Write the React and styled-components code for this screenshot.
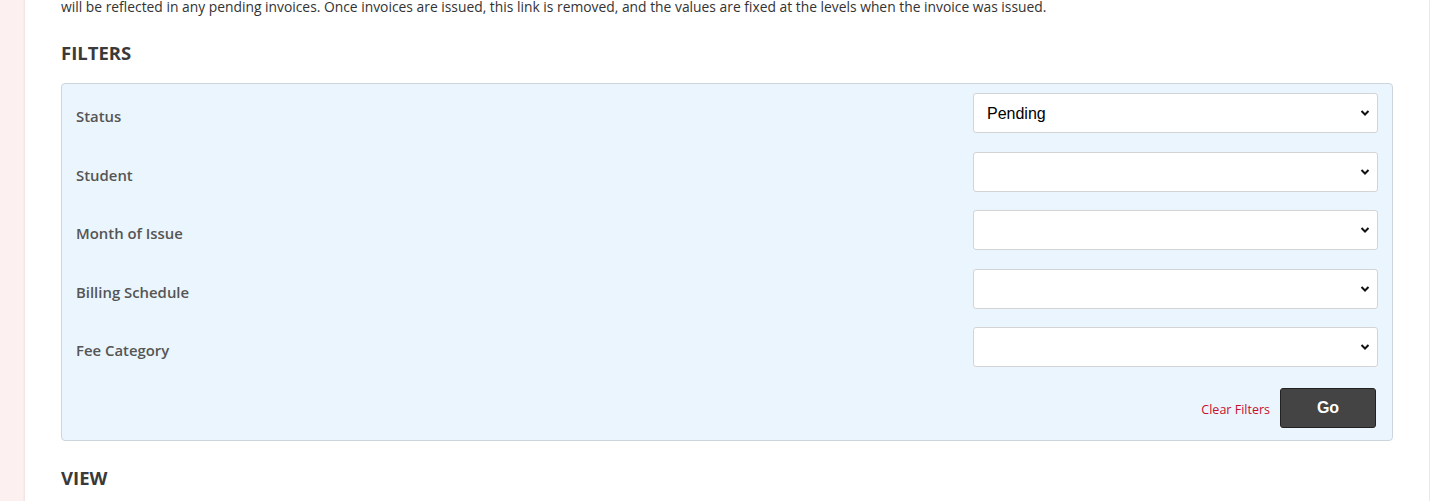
import React from "react";
import styled, { createGlobalStyle } from "styled-components";

const GlobalStyle = createGlobalStyle`
  html, body {
    margin: 0;
    padding: 0;
    background: #fdf0f0;
    font-family: "Open Sans", "Noto Sans", sans-serif;
    overflow: hidden;
  }
`;

const Page = styled.div`
  margin-left: 25px;
  width: 1404px;
  min-height: 501px;
  background: #fff;
  box-shadow: 0 0 3px rgba(0, 0, 0, 0.12);
  padding: 0 36px;
  box-sizing: border-box;
  overflow: hidden;
`;

const Intro = styled.p`
  margin: -3px 0 0;
  font-size: 13.85px;
  line-height: 20px;
  color: #333;
`;

const Heading = styled.h2`
  margin: ${p => (p.$spaced ? "24px" : "23px")} 0 18px;
  font-size: 18.5px;
  line-height: 25px;
  font-weight: 700;
  color: #3a3a3a;
  text-transform: uppercase;
`;

const FilterPanel = styled.form`
  background: #ebf5fe;
  border: 1px solid #cdd5dd;
  border-radius: 4px;
  padding: 9px 14px 12px;
  display: flex;
  flex-direction: column;
  gap: 18.5px;
`;

const Row = styled.div`
  display: flex;
  align-items: center;
  justify-content: space-between;
  height: 40px;
`;

const Label = styled.label`
  font-size: 14.9px;
  font-weight: 600;
  color: #555;
  padding-top: 6px;
`;

const SelectWrap = styled.div`
  position: relative;
  width: 405px;
  height: 40px;
`;

const Select = styled.select`
  appearance: none;
  width: 100%;
  height: 100%;
  box-sizing: border-box;
  border: 1px solid #d4d4d4;
  border-radius: 3px;
  background: #fff;
  padding: 0 30px 0 13px;
  font-family: "Liberation Sans", Arial, sans-serif;
  font-size: 16px;
  color: #000;
  outline: none;
`;

const Chevron = styled.svg`
  position: absolute;
  right: 8px;
  top: 16px;
  width: 10px;
  height: 8px;
  pointer-events: none;
`;

const Actions = styled.div`
  display: flex;
  justify-content: flex-end;
  align-items: center;
  gap: 10px;
  padding-top: 2.5px;
  padding-right: 2px;
`;

const ClearLink = styled.a`
  font-size: 12.5px;
  color: #c8102e;
  text-decoration: none;
  padding-top: 2px;
`;

const GoButton = styled.button`
  width: 96px;
  height: 40px;
  background: #444;
  border: 1px solid #222;
  border-radius: 3px;
  color: #fff;
  font-family: "Liberation Sans", Arial, sans-serif;
  font-size: 16px;
  font-weight: 700;
`;

const filters = [
  { label: "Status", value: "Pending" },
  { label: "Student", value: "" },
  { label: "Month of Issue", value: "" },
  { label: "Billing Schedule", value: "" },
  { label: "Fee Category", value: "" },
];

const FilterRow = ({ label, value }) => (
  <Row>
    <Label>{label}</Label>
    <SelectWrap>
      <Select defaultValue={value}>
        <option value="">{""}</option>
        {value && <option value={value}>{value}</option>}
      </Select>
      <Chevron viewBox="0 0 10 8">
        <path d="M1.5 2 L5 5.5 L8.5 2" fill="none" stroke="#111" strokeWidth="2" />
      </Chevron>
    </SelectWrap>
  </Row>
);

const App = () => {
  return (
    <>
      <GlobalStyle />
      <Page>
        <Intro>
          will be reflected in any pending invoices. Once invoices are issued, this link is removed, and the values are
          fixed at the levels when the invoice was issued.
        </Intro>
        <Heading>Filters</Heading>
        <FilterPanel onSubmit={e => e.preventDefault()}>
          {filters.map(f => (
            <FilterRow key={f.label} label={f.label} value={f.value} />
          ))}
          <Actions>
            <ClearLink href="#">Clear Filters</ClearLink>
            <GoButton type="submit">Go</GoButton>
          </Actions>
        </FilterPanel>
        <Heading $spaced>View</Heading>
      </Page>
    </>
  );
};

export default App;
